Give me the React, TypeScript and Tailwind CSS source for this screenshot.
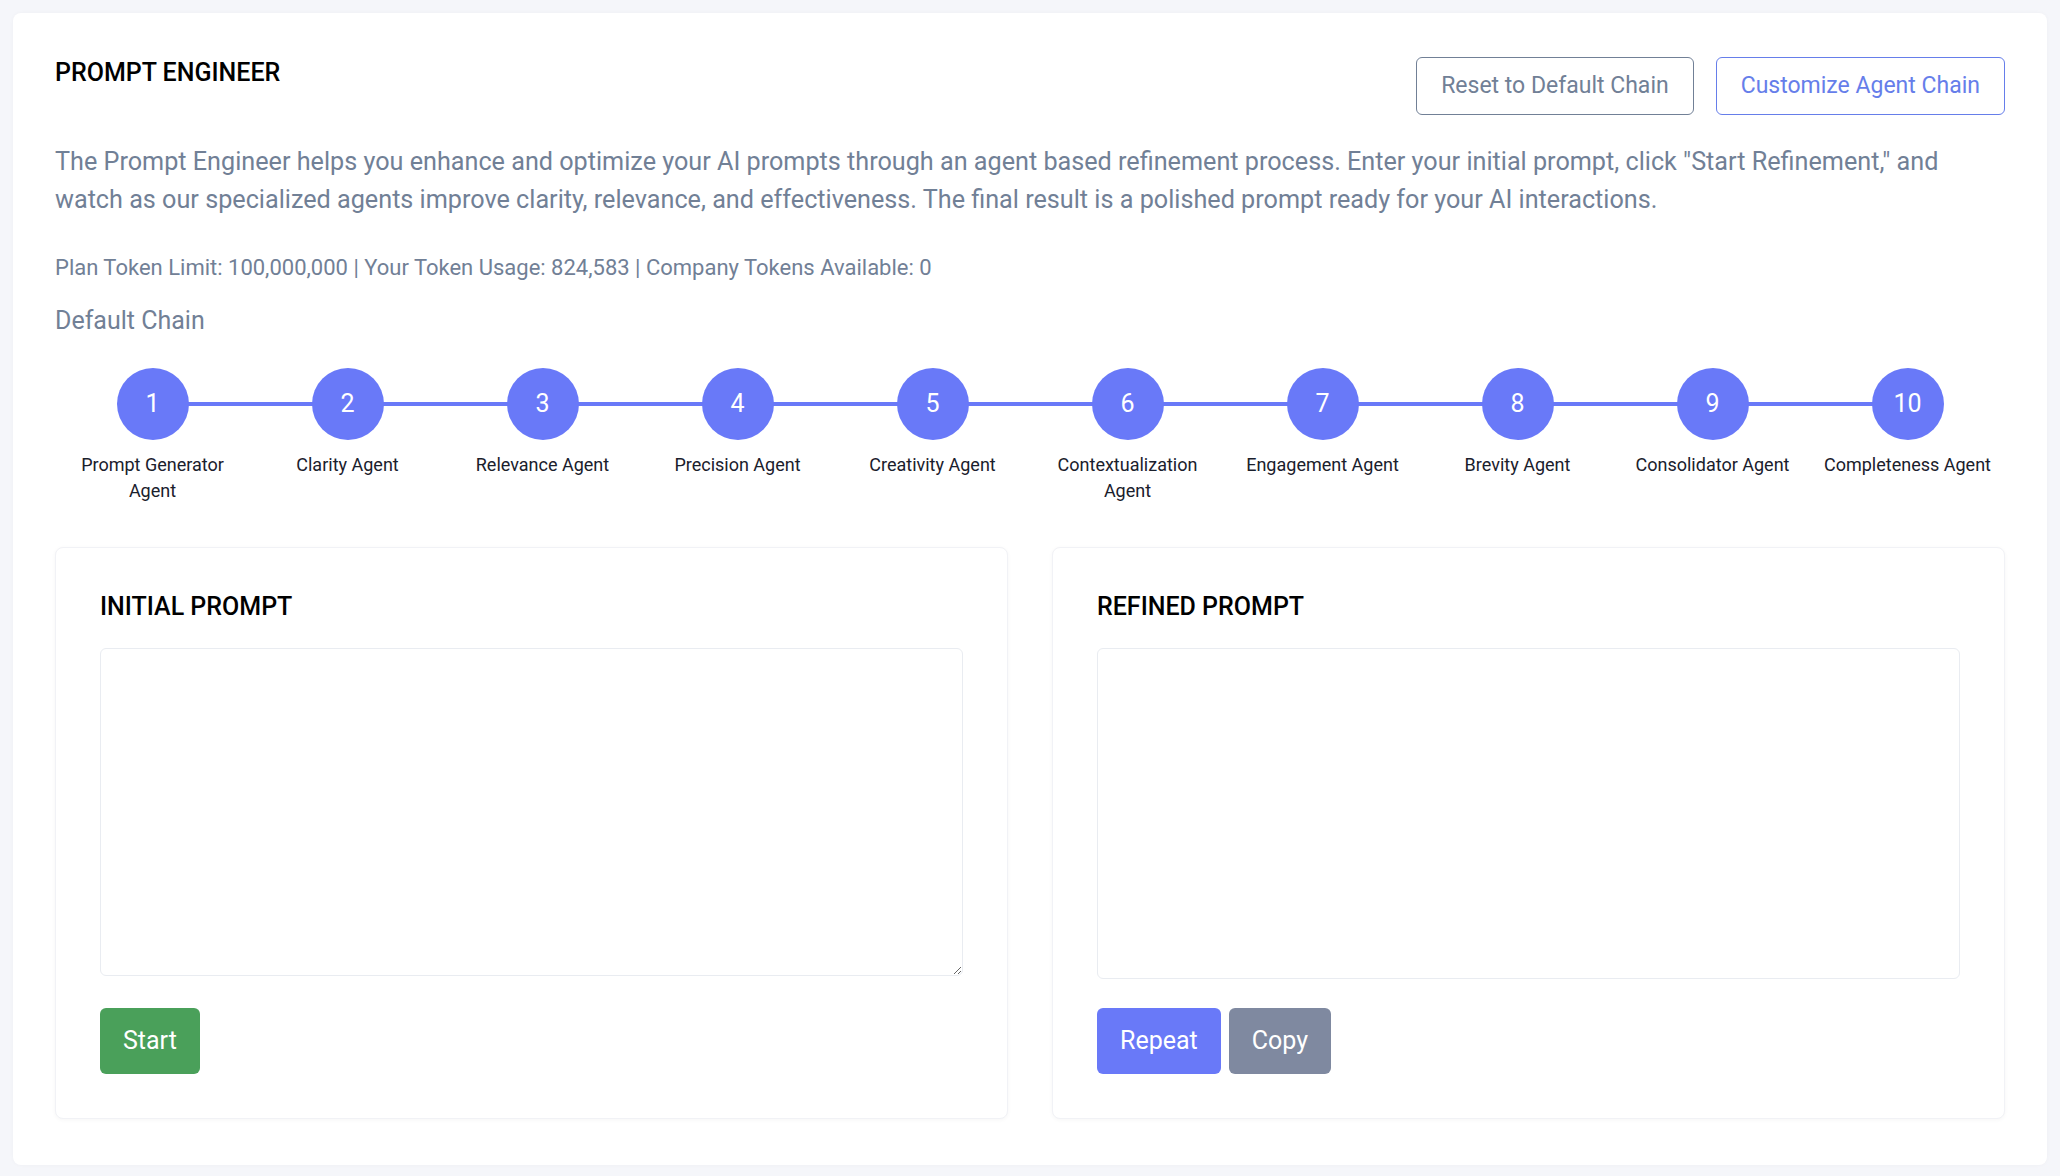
import React from "react";

const agents = [
  "Prompt Generator Agent",
  "Clarity Agent",
  "Relevance Agent",
  "Precision Agent",
  "Creativity Agent",
  "Contextualization Agent",
  "Engagement Agent",
  "Brevity Agent",
  "Consolidator Agent",
  "Completeness Agent",
];

export default function App() {
  return (
    <div
      className="min-h-screen bg-[#f5f6fa] p-[13px]"
      style={{ fontFamily: "Roboto, 'Liberation Sans', sans-serif" }}
    >
      <div className="bg-white rounded-lg px-[42px] pt-[42px] pb-[46px] shadow-[0_0_4px_rgba(0,0,0,0.03)]">
        <div className="flex items-start justify-between">
          <h1 className="text-[25px] leading-[36px] font-medium text-black">PROMPT ENGINEER</h1>
          <div className="flex gap-[22px] mt-[2px]">
            <button className="h-[58px] px-[24px] border border-[#718096] rounded-md text-[23px] text-[#718096] bg-white">
              Reset to Default Chain
            </button>
            <button className="h-[58px] px-[24px] border border-[#667eea] rounded-md text-[23px] text-[#667eea] bg-white">
              Customize Agent Chain
            </button>
          </div>
        </div>
        <p className="mt-[28px] text-[25.2px] leading-[38px] text-[#718096]">
          The Prompt Engineer helps you enhance and optimize your AI prompts through an agent based refinement process. Enter your initial prompt, click "Start Refinement," and watch as our specialized agents improve clarity, relevance, and effectiveness. The final result is a polished prompt ready for your AI interactions.
        </p>
        <p className="mt-[34px] text-[22px] leading-[30px] text-[#718096]">
          Plan Token Limit: 100,000,000 | Your Token Usage: 824,583 | Company Tokens Available: 0
        </p>
        <p className="mt-[20px] text-[25px] leading-[36px] text-[#718096]">Default Chain</p>

        <div className="relative mt-[29px] grid grid-cols-10">
          <div className="absolute left-[97.5px] right-[97.5px] top-[34px] h-[4px] bg-[#6979f8]" />
          {agents.map((name, i) => (
            <div key={name} className="relative flex flex-col items-center">
              <div className="w-[72px] h-[72px] rounded-full bg-[#6979f8] flex items-center justify-center text-white text-[25px]">
                {i + 1}
              </div>
              <div className="mt-[12px] px-[10px] text-center text-[18px] leading-[26px] text-[#1a202c]">
                {name}
              </div>
            </div>
          ))}
        </div>

        <div className="mt-[43px] grid grid-cols-2 gap-[44px]">
          <div className="bg-white rounded-lg border border-[#f1f2f6] shadow-[0_1px_4px_rgba(0,0,0,0.04)] px-[44px] pt-[45px] pb-[44px]">
            <h2 className="text-[25px] leading-[28px] font-medium text-black">INITIAL PROMPT</h2>
            <textarea className="mt-[27px] block w-full h-[328px] border border-[#e9ecf1] rounded-md p-3 outline-none" />
            <div className="mt-[32px] flex">
              <button className="h-[66px] px-[23px] rounded-md bg-[#4aa05a] text-white text-[25px]">Start</button>
            </div>
          </div>
          <div className="bg-white rounded-lg border border-[#f1f2f6] shadow-[0_1px_4px_rgba(0,0,0,0.04)] px-[44px] pt-[45px] pb-[44px]">
            <h2 className="text-[25px] leading-[28px] font-medium text-black">REFINED PROMPT</h2>
            <div className="mt-[27px] w-full h-[331px] border border-[#e9ecf1] rounded-md" />
            <div className="mt-[29px] flex gap-[8px]">
              <button className="h-[66px] px-[23px] rounded-md bg-[#6979f8] text-white text-[25px]">Repeat</button>
              <button className="h-[66px] px-[23px] rounded-md bg-[#7f89a0] text-white text-[25px]">Copy</button>
            </div>
          </div>
        </div>
      </div>
    </div>
  );
}
